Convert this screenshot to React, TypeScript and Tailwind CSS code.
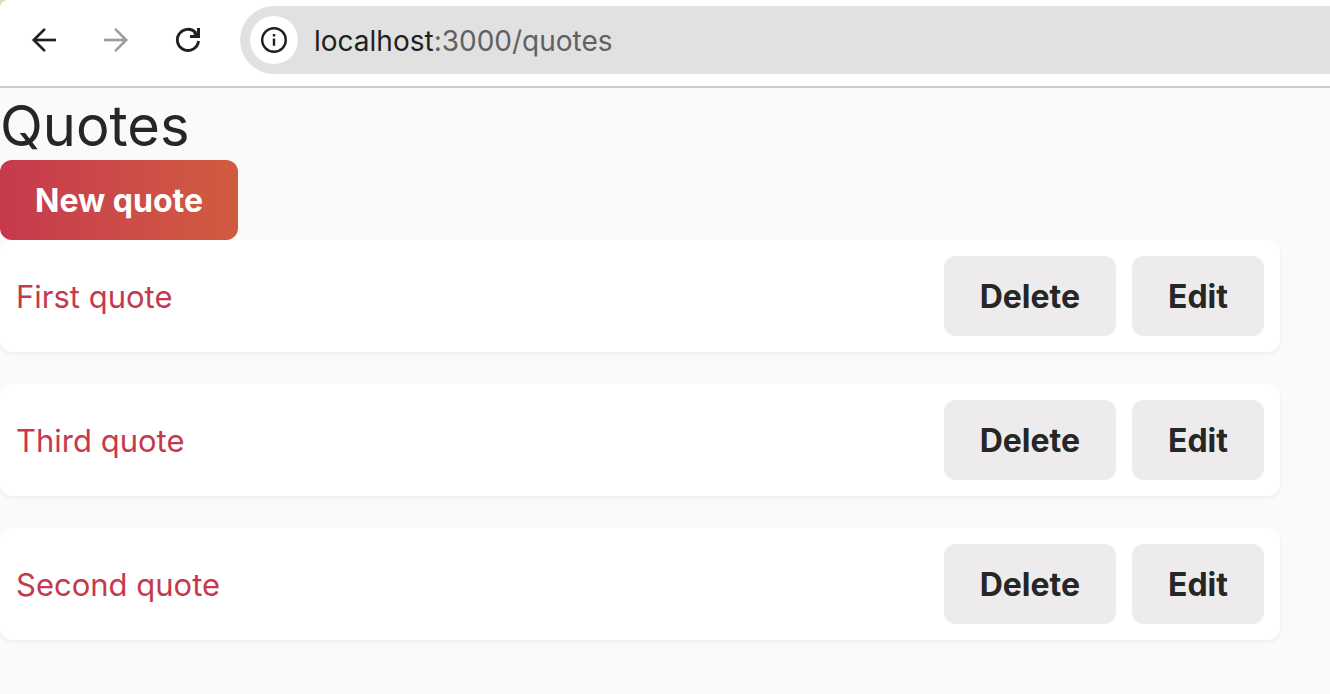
const quotes = ["First quote", "Third quote", "Second quote"];

function BrowserBar() {
  return (
    <div className="bg-[#cde6ba]">
      <header className="flex h-22 items-start rounded-tl-lg border-b-2 border-[#c9cccc] bg-white pt-1.5">
        <nav aria-label="History" className="flex h-17 items-center gap-10 pl-7">
          <button type="button" aria-label="Back" className="size-8">
            <svg
              viewBox="0 0 32 32"
              className="size-8"
              fill="none"
              stroke="#1f2023"
              strokeWidth="2.7"
            >
              <path d="M28 16H6" />
              <path d="M16.2 5.6 5.8 16l10.4 10.4" strokeLinecap="round" />
            </svg>
          </button>
          <button type="button" aria-label="Forward" className="size-8">
            <svg
              viewBox="0 0 32 32"
              className="size-8"
              fill="none"
              stroke="#9d9d9d"
              strokeWidth="2.7"
            >
              <path d="M4 16h22" />
              <path d="M15.8 5.6 26.2 16 15.8 26.4" strokeLinecap="round" />
            </svg>
          </button>
          <button type="button" aria-label="Reload" className="size-8">
            <svg viewBox="0 0 32 32" className="size-8">
              <path
                d="M26.5 17A10.6 10.6 0 1 1 23.8 8.8"
                fill="none"
                stroke="#1f2023"
                strokeWidth="2.9"
              />
              <path d="M25 4h3v10H18v-3h4.4l-1.2-1.4 2-2.4L25 8.4z" fill="#1f2023" />
            </svg>
          </button>
        </nav>
        <div className="ml-9 flex h-17 flex-1 items-center gap-4 rounded-l-full bg-[#e1e1e1] pl-2.5">
          <button
            type="button"
            aria-label="Site information"
            className="flex size-12 items-center justify-center rounded-full bg-white"
          >
            <svg
              viewBox="0 0 28 28"
              className="size-7"
              fill="none"
              stroke="#1f2023"
              strokeWidth="2.4"
            >
              <circle cx="14" cy="14" r="11.8" />
              <path d="M14 12.6v7.2M14 8v2.4" />
            </svg>
          </button>
          <p className="pt-0.5 text-[28px] text-[#5f6062]">
            <span className="text-[#1f1f1f]">localhost</span>:3000/quotes
          </p>
        </div>
      </header>
    </div>
  );
}

function Quote({ name }: { name: string }) {
  return (
    <li className="flex items-center justify-between rounded-xl bg-white p-4 shadow-[0_2px_4px_rgba(0,0,0,0.05)]">
      <a href="#quote" className="pt-0.5 text-[31px] leading-12 text-[#c6394d]">
        {name}
      </a>
      <div className="flex gap-4">
        {["Delete", "Edit"].map((action) => (
          <button
            key={action}
            type="button"
            className="h-20 rounded-xl bg-[#eeebec] px-9 pt-0.5 text-[32px] leading-12 font-bold text-[#262626]"
          >
            {action}
          </button>
        ))}
      </div>
    </li>
  );
}

export default function App() {
  return (
    <div className="min-h-screen bg-[#fbfaf8] font-[Inter,sans-serif] text-[#262626]">
      <BrowserBar />
      <main className="max-w-[1280px]">
        <h1 className="pt-1 text-[56px] leading-17">Quotes</h1>
        <button
          type="button"
          className="block h-20 rounded-xl bg-linear-to-r from-[#c6394d] to-[#d15b40] px-[35px] pt-0.5 text-[32px] leading-12 font-bold text-white"
        >
          New quote
        </button>
        <ul className="flex flex-col gap-8">
          {quotes.map((name) => (
            <Quote key={name} name={name} />
          ))}
        </ul>
      </main>
    </div>
  );
}
